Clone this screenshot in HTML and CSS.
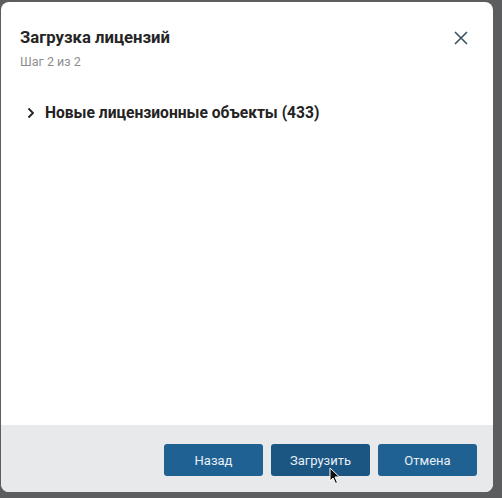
FILE: index.html
```html
<!DOCTYPE html>
<html lang="ru">
<head>
    <meta charset="UTF-8">
    <title>Загрузка лицензий</title>
    <link rel="stylesheet" href="styles.css">
</head>
<body>
    <div class="dialog">
        <div class="dialog-header">
            <div class="titles">
                <h1>Загрузка лицензий</h1>
                <div class="step">Шаг 2 из 2</div>
            </div>
            <button class="close" aria-label="Закрыть">
                <svg width="14" height="14" viewBox="0 0 14 14">
                    <path d="M1 1 L13 13 M13 1 L1 13" stroke="#3e5663" stroke-width="1.7" fill="none"/>
                </svg>
            </button>
        </div>

        <div class="dialog-body">
            <div class="group">
                <svg class="chevron" width="8" height="12" viewBox="0 0 8 12">
                    <path d="M1.5 1.5 L6 6 L1.5 10.5" stroke="#222" stroke-width="1.8" fill="none"/>
                </svg>
                <span>Новые лицензионные объекты (433)</span>
            </div>
        </div>

        <div class="dialog-footer">
            <button class="btn">Назад</button>
            <button class="btn btn-hover">Загрузить
                <svg class="cursor" width="12" height="18" viewBox="0 0 12 18">
                    <path d="M1 1 L1 14 L4 11 L6.5 16.5 L8.5 15.5 L6 10 L10.5 10 Z" fill="#111" stroke="#fff" stroke-width="1"/>
                </svg>
            </button>
            <button class="btn">Отмена</button>
        </div>
    </div>
</body>
</html>
```

FILE: styles.css
```css
body {
    margin: 0;
    background-color: #5c5d5e;
    font-family: Roboto, 'Noto Sans', sans-serif;
    color: #222;
}

.dialog {
    width: 492px;
    height: 490px;
    margin: 2px 0 0 1px;
    background-color: #fff;
    border-radius: 8px;
    display: flex;
    flex-direction: column;
    overflow: hidden;
}

.dialog-header {
    display: flex;
    justify-content: space-between;
    align-items: flex-start;
    padding: 25px 25px 0 19px;
}

.dialog-header h1 {
    margin: 0;
    font-size: 16.7px;
    font-weight: 700;
    line-height: 22px;
    color: #252525;
}

.step {
    margin-top: 5px;
    font-size: 12.5px;
    color: #8e8e8e;
}

.close {
    border: none;
    background: none;
    padding: 0;
    margin-top: 4px;
    cursor: pointer;
}

.dialog-body {
    flex: 1;
    padding: 35px 20px 0 26px;
}

.group {
    display: flex;
    align-items: center;
    gap: 10px;
    font-size: 15.6px;
    font-weight: 700;
    color: #232323;
}

.dialog-footer {
    display: flex;
    justify-content: flex-end;
    gap: 8px;
    background-color: #e8e9ea;
    height: 67px;
    padding: 19px 16px 0 0;
    box-sizing: border-box;
}

.btn {
    position: relative;
    width: 99px;
    height: 32px;
    border: none;
    border-radius: 3px;
    background-color: #1f6193;
    color: #e8f0f6;
    font-family: Roboto, 'Noto Sans', sans-serif;
    font-size: 13px;
}

.btn-hover {
    background-color: #1b5683;
}

.cursor {
    position: absolute;
    left: 58px;
    top: 23px;
}
```
